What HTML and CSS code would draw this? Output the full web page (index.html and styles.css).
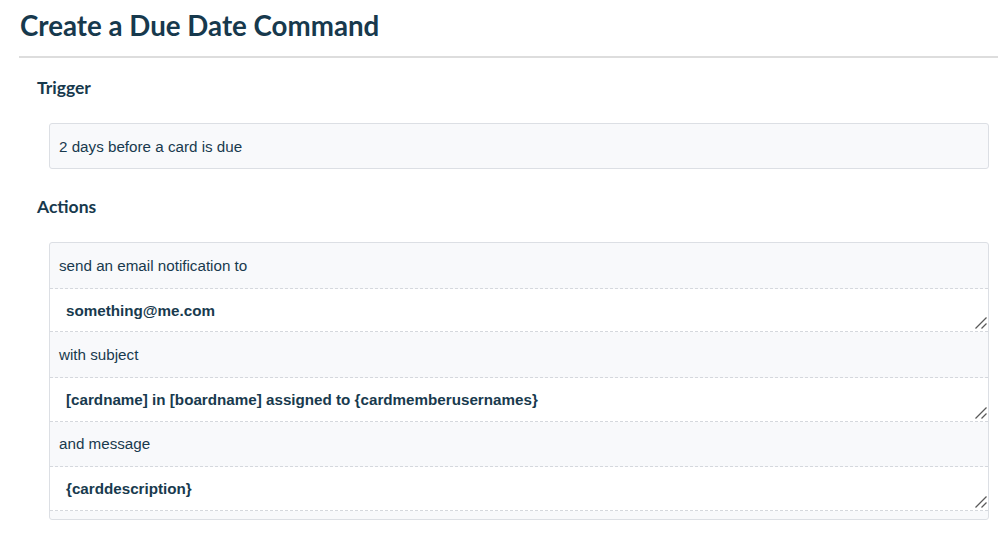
FILE: index.html
```html
<!DOCTYPE html>
<html>
<head>
<meta charset="utf-8">
<link rel="stylesheet" href="styles.css">
</head>
<body>
<h1 class="title">Create a Due Date Command</h1>
<div class="rule"></div>
<section class="section">
  <h2 class="heading heading-first">Trigger</h2>
  <div class="trigger">2 days before a card is due</div>
</section>
<section class="section">
  <h2 class="heading">Actions</h2>
  <div class="actions">
    <div class="label">send an email notification to</div>
    <div class="field-wrap">
      <textarea class="field">something@me.com</textarea>
      <svg class="grip" width="12" height="12" viewBox="0 0 12 12"><path d="M0.5 11.5 L11.5 0.5 M6.5 11.5 L11.5 6.5" stroke="#5a5a5a" stroke-width="1.3" fill="none"/></svg>
    </div>
    <div class="label">with subject</div>
    <div class="field-wrap">
      <textarea class="field">[cardname] in [boardname] assigned to {cardmemberusernames}</textarea>
      <svg class="grip" width="12" height="12" viewBox="0 0 12 12"><path d="M0.5 11.5 L11.5 0.5 M6.5 11.5 L11.5 6.5" stroke="#5a5a5a" stroke-width="1.3" fill="none"/></svg>
    </div>
    <div class="label">and message</div>
    <div class="field-wrap">
      <textarea class="field">{carddescription}</textarea>
      <svg class="grip" width="12" height="12" viewBox="0 0 12 12"><path d="M0.5 11.5 L11.5 0.5 M6.5 11.5 L11.5 6.5" stroke="#5a5a5a" stroke-width="1.3" fill="none"/></svg>
    </div>
  </div>
</section>
</body>
</html>
```

FILE: styles.css
```css
html, body {
  margin: 0;
  padding: 0;
  background: #ffffff;
}
body {
  width: 998px;
  color: #183a4e;
  font-family: "Liberation Sans", Arial, sans-serif;
}
.title {
  margin: 8px 0 0 20px;
  font-family: Lato, "Noto Sans", sans-serif;
  font-weight: 700;
  font-size: 27.7px;
  line-height: 35px;
  color: #17394d;
}
.rule {
  margin: 13px 0 0 19px;
  height: 2px;
  background: #dddddd;
}
.section {
  padding: 0 9px 0 37px;
}
.heading {
  margin: 27px 0 0 0;
  font-family: Lato, "Noto Sans", sans-serif;
  font-weight: 700;
  font-size: 17.5px;
  line-height: 22px;
  color: #17394d;
}
.heading-first {
  margin-top: 19px;
}
.trigger {
  margin: 24px 0 0 12px;
  height: 44px;
  box-sizing: content-box;
  border: 1px solid #dcdfe4;
  border-radius: 3px;
  background: #f8f9fb;
  padding: 0 9px;
  display: flex;
  align-items: center;
  font-size: 15.2px;
}
.actions {
  margin: 24px 0 0 12px;
  border: 1px solid #dcdfe4;
  border-radius: 3px;
  background: #f8f9fb;
  padding-bottom: 8px;
}
.label {
  height: 44.67px;
  border-bottom: 1px dashed #d5d8dd;
  padding: 0 0 0 9px;
  box-sizing: content-box;
  display: flex;
  align-items: center;
  font-size: 15.2px;
}
.field-wrap {
  position: relative;
  height: 42.67px;
  border-bottom: 1px dashed #d5d8dd;
  background: #ffffff;
}
.field {
  display: block;
  width: 100%;
  height: 100%;
  box-sizing: border-box;
  margin: 0;
  border: none;
  background: transparent;
  padding: 12px 16px 0 16px;
  font-family: "Liberation Sans", Arial, sans-serif;
  font-weight: 700;
  font-size: 15.2px;
  line-height: 20px;
  color: #183a4e;
  resize: none;
  outline: none;
  overflow: hidden;
}
.grip {
  position: absolute;
  right: 1px;
  bottom: 2px;
  pointer-events: none;
}
```
